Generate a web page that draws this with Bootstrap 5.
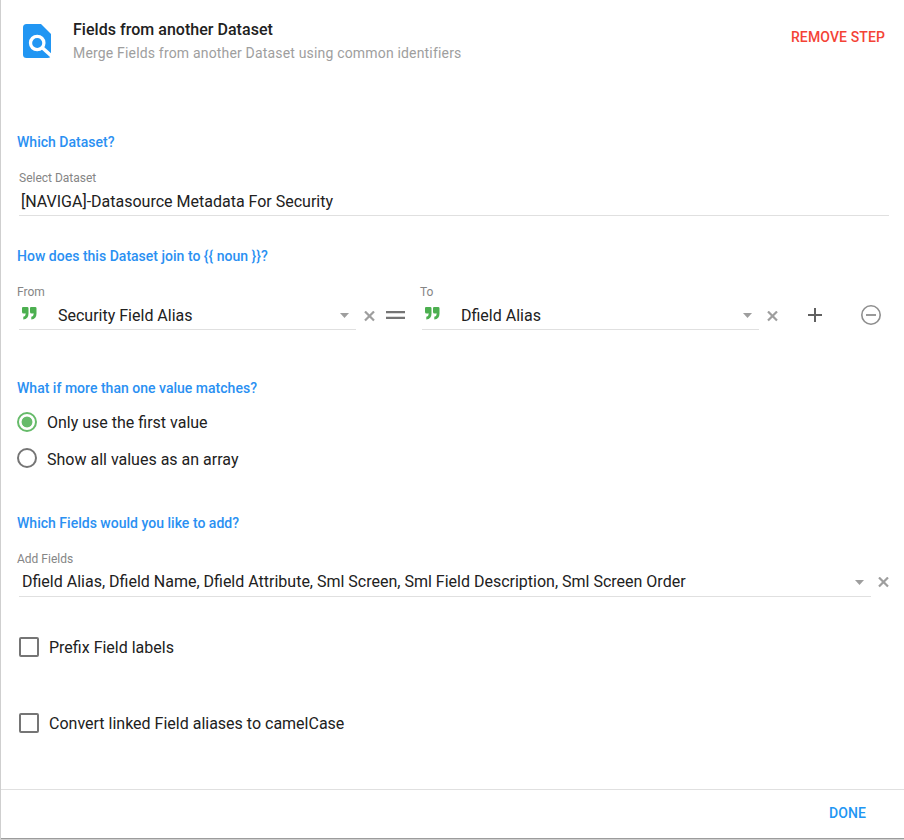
<!DOCTYPE html>
<html lang="en">
<head>
<meta charset="utf-8">
<meta name="viewport" content="width=device-width, initial-scale=1">
<title>Fields from another Dataset</title>
<link rel="stylesheet" href="https://cdn.jsdelivr.net/npm/bootstrap@5.3.0/dist/css/bootstrap.min.css">
<style>
body { font-family: Roboto, "Liberation Sans", sans-serif; font-size: 16px; color: #212121; background: #fff; overflow: hidden; }
.step-panel { height: 840px; border: 0 solid #cfcfcf; border-left-width: 1px; border-bottom: 1px solid #cfcfcf; box-shadow: inset 0 -1px 0 #9c9c9c; }
.step-header { height: 132px; padding: 18px 19px 0 22px; }
.step-icon { margin-right: 20px; }
.step-title { font-size: 16px; line-height: 24px; font-weight: 500; letter-spacing: .03px; }
.step-subtitle { font-size: 14px; line-height: 20px; color: #9e9e9e; padding-top: 1px; letter-spacing: .175px; }
.text-action { font-size: 14px; line-height: 20px; font-weight: 500; border: 0; padding: 0; letter-spacing: .12px; }
.text-remove { color: #f44336; margin-top: 9px; }
.text-done { color: #2196f3; }
.question { font-size: 14px; line-height: 20px; font-weight: 500; color: #2a90f2; margin: 0 0 0 16px; letter-spacing: .015px; }
.field-label { font-size: 12px; line-height: 16px; color: #858585; }
.field-line { height: 30px; border-bottom: 1px solid #e0e0e0; line-height: 24px; padding-top: 4px; }
.field-line .caret-icon { margin-top: 9px; }
.field-row { margin: 18px 0 0 16px; }
.dataset-field { margin: 18px 15px 0 18px; }
.dataset-field .field-line { padding-left: 2px; }
.join-line { width: 337px; margin-left: 2px; padding-right: 7px; }
.quote-icon { margin: 3px 21px 0 3px; }
.q-join { margin-top: 30px; }
.q-match { margin-top: 48px; }
.q-fields { margin-top: 45px; }
.option-list { padding: 14px 0 0 16px; }
.check-list { padding: 40px 0 0 18px; }
.option-line { height: 20px; line-height: 20px; gap: 10px; }
.option-line span { padding-top: 1px; }
.option-list .option-line + .option-line { margin-top: 16px; }
.option-list .option-line + .option-line span { padding-top: 2px; }
.check-list .option-line + .option-line { margin-top: 56px; }
.option-line .form-check-input { width: 20px; height: 20px; margin: 0; border: 2px solid #757575; box-shadow: none; background-color: #fff; flex: none; }
.option-line .form-check-input[type=checkbox] { border-radius: 2px; }
.option-line .form-check-input:checked { border-color: #66bb6a; background-image: radial-gradient(circle closest-side, #66bb6a 0 50%, transparent 58%); background-size: 100% 100%; background-origin: border-box; }
.step-footer { height: 50px; border-top: 1px solid #e0e0e0; padding: 13px 38px 0 0; }
.add-line { width: 852px; margin-left: 2px; padding: 3px 7px 0 3px; }
.add-line .caret-icon { margin-top: 10px; }
.clear-icon { margin: 0 0 8px 8px; }
.clear-add { margin: 0 0 9px 7px; }
.equals-icon { margin: 0 15px 11px 11px; }
.plus-icon { margin: 0 39px 8px 30px; }
.minus-icon { margin-bottom: 5px; }
svg { display: block; flex: none; }
</style>
<script src="https://cdn.jsdelivr.net/npm/bootstrap@5.3.0/dist/js/bootstrap.bundle.min.js"></script>
</head>
<body>
<svg class="d-none">
  <symbol id="caret" viewBox="0 0 9 5"><path d="M0 0h9L4.500 5z" fill="#9e9e9e"/></symbol>
  <symbol id="clear" viewBox="0 0 11 11"><path d="M1 .5l9 9M10 .5l-9 9" stroke="#9e9e9e" stroke-width="2.200" fill="none"/></symbol>
  <symbol id="quote" viewBox="0 0 15 13"><path d="M1 0h4.200q1.300 0 1.300 1.300v5.200Q6.500 12 1.300 12.400V9.800Q3.700 9.300 3.800 6.500H1.500Q0 6.500 0 5V1.200Q0 0 1 0zM9 0h4.200q1.300 0 1.300 1.300v5.200q0 5.500-5.200 5.900V9.800q2.400-.5 2.500-3.300H9.500Q8 6.500 8 5V1.200Q8 0 9 0z" fill="#4caf50"/></symbol>
</svg>
<main class="step-panel d-flex flex-column">
  <header class="step-header d-flex align-items-start">
    <svg class="step-icon mt-1" width="30" height="36" viewBox="0 0 30 36"><path d="M3.500 2H18l10 10v20.500Q28 36 24.500 36h-21Q0 36 0 32.500v-27Q0 2 3.500 2z" fill="#2196f3"/><circle cx="14.200" cy="21" r="6.700" fill="none" stroke="#fff" stroke-width="3.300"/><path d="M18.500 25l10.500 9.500" stroke="#fff" stroke-width="3.500"/></svg>
    <div class="flex-grow-1">
      <div class="step-title">Fields from another Dataset</div>
      <div class="step-subtitle">Merge Fields from another Dataset using common identifiers</div>
    </div>
    <button class="btn text-action text-remove">REMOVE STEP</button>
  </header>

  <h2 class="question">Which Dataset?</h2>
  <div class="dataset-field">
    <div class="field-label">Select Dataset</div>
    <div class="field-line">[NAVIGA]-Datasource Metadata For Security</div>
  </div>

  <h2 class="question q-join">How does this Dataset join to {{ noun }}?</h2>
  <div class="field-row d-flex align-items-end">
    <div>
      <div class="field-label">From</div>
      <div class="field-line join-line d-flex">
        <svg class="quote-icon" width="15" height="13"><use href="#quote"/></svg>
        <span class="flex-grow-1">Security Field Alias</span>
        <svg class="caret-icon" width="9" height="5"><use href="#caret"/></svg>
      </div>
    </div>
    <svg class="clear-icon" width="11" height="11"><use href="#clear"/></svg>
    <svg class="equals-icon" width="19" height="8"><path d="M0 1.100h19M0 6.900h19" stroke="#757575" stroke-width="2.200"/></svg>
    <div>
      <div class="field-label">To</div>
      <div class="field-line join-line d-flex">
        <svg class="quote-icon" width="15" height="13"><use href="#quote"/></svg>
        <span class="flex-grow-1">Dfield Alias</span>
        <svg class="caret-icon" width="9" height="5"><use href="#caret"/></svg>
      </div>
    </div>
    <svg class="clear-icon" width="11" height="11"><use href="#clear"/></svg>
    <svg class="plus-icon" width="14" height="14"><path d="M0 7h14M7 0v14" stroke="#616161" stroke-width="2"/></svg>
    <svg class="minus-icon" width="20" height="20"><circle cx="10" cy="10" r="9.200" fill="none" stroke="#8e8e8e" stroke-width="1.600"/><path d="M5 10h10" stroke="#8e8e8e" stroke-width="1.800"/></svg>
  </div>

  <h2 class="question q-match">What if more than one value matches?</h2>
  <div class="option-list">
    <label class="option-line d-flex"><input class="form-check-input" type="radio" name="match" checked><span>Only use the first value</span></label>
    <label class="option-line d-flex"><input class="form-check-input" type="radio" name="match"><span>Show all values as an array</span></label>
  </div>

  <h2 class="question q-fields">Which Fields would you like to add?</h2>
  <div class="field-row d-flex align-items-end">
    <div>
      <div class="field-label">Add Fields</div>
      <div class="field-line add-line d-flex">
        <span class="flex-grow-1">Dfield Alias, Dfield Name, Dfield Attribute, Sml Screen, Sml Field Description, Sml Screen Order</span>
        <svg class="caret-icon" width="9" height="5"><use href="#caret"/></svg>
      </div>
    </div>
    <svg class="clear-add" width="11" height="11"><use href="#clear"/></svg>
  </div>

  <div class="check-list">
    <label class="option-line d-flex"><input class="form-check-input" type="checkbox"><span>Prefix Field labels</span></label>
    <label class="option-line d-flex"><input class="form-check-input" type="checkbox"><span>Convert linked Field aliases to camelCase</span></label>
  </div>

  <footer class="step-footer d-flex justify-content-end align-items-start mt-auto">
    <button class="btn text-action text-done">DONE</button>
  </footer>
</main>
</body>
</html>
